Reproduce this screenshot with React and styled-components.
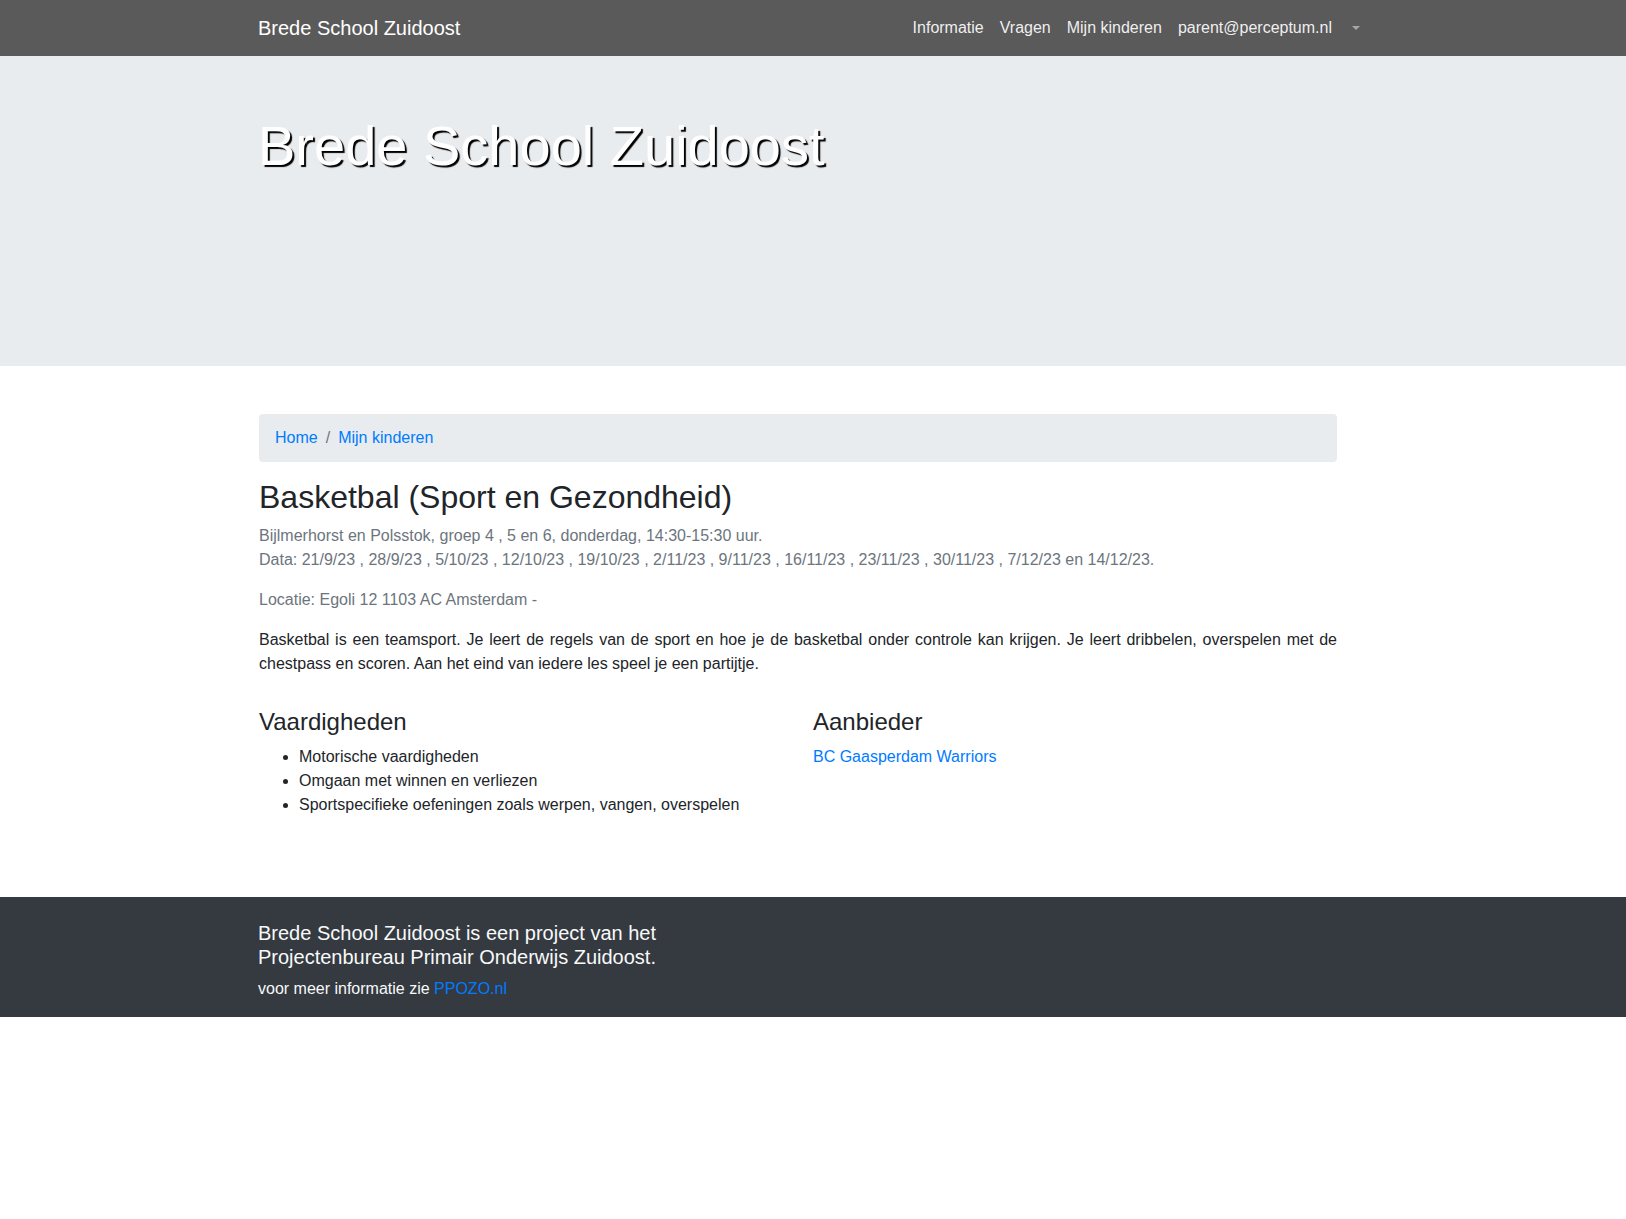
import React from "react";
import styled, { createGlobalStyle } from "styled-components";

const GlobalStyle = createGlobalStyle`
  html, body { margin: 0; padding: 0; background: #fff; }
  body {
    font-family: "Liberation Sans", Arial, Helvetica, sans-serif;
    font-size: 16px;
    line-height: 1.5;
    color: #212529;
  }
  * { box-sizing: border-box; }
`;

const Navbar = styled.nav`
  background: #5a5a5a;
  height: 56px;
`;

const Container = styled.div`
  width: 1110px;
  margin: 0 auto;
`;

const NavInner = styled(Container)`
  height: 100%;
  display: flex;
  align-items: center;
  justify-content: space-between;
`;

const Brand = styled.a`
  color: #fff;
  font-size: 20px;
  line-height: 30px;
  text-decoration: none;
`;

const NavList = styled.ul`
  display: flex;
  align-items: center;
  list-style: none;
  margin: 0;
  padding: 0;
`;

const NavLink = styled.a`
  display: block;
  padding: 8px;
  color: rgba(255, 255, 255, 0.92);
  text-decoration: none;
  line-height: 24px;
`;

const Caret = styled.span`
  display: inline-block;
  width: 0;
  height: 0;
  margin: 0 8px 0 12px;
  border-top: 4px solid #a6a6a6;
  border-left: 4px solid transparent;
  border-right: 4px solid transparent;
  vertical-align: middle;
  transform: translateY(-1px);
`;

const Hero = styled.header`
  background: #e9ecef;
  height: 310px;
  padding-top: 56px;
`;

const HeroTitle = styled.h1`
  margin: 0;
  font-size: 56px;
  font-weight: 300;
  line-height: 1.2;
  color: #fff;
  text-shadow: 2px 2px 1px #000;
`;

const Main = styled(Container)`
  padding-left: 1px;
  padding-right: 31px;
  padding-top: 48px;
`;

const Breadcrumb = styled.ol`
  display: flex;
  list-style: none;
  margin: 0 0 16px;
  padding: 12px 16px;
  background: #e9ecef;
  border-radius: 4px;
`;

const Crumb = styled.li`
  & + &::before {
    content: "/";
    color: #6c757d;
    padding: 0 8px;
  }
`;

const Link = styled.a`
  color: #007bff;
  text-decoration: none;
`;

const Title = styled.h2`
  margin: 0 0 8px;
  font-size: 32px;
  font-weight: 500;
  line-height: 1.2;
`;

const Para = styled.p`
  margin: 0 0 16px;
  color: ${(p) => (p.$muted ? "#6c757d" : "#212529")};
  text-align: ${(p) => (p.$justify ? "justify" : "left")};
`;

const Columns = styled.div`
  display: grid;
  grid-template-columns: 1fr 1fr;
  column-gap: 30px;
  margin-top: 32px;
`;

const SubTitle = styled.h4`
  margin: 0 0 8px;
  font-size: 24px;
  font-weight: 500;
  line-height: 1.2;
`;

const List = styled.ul`
  margin: 0 0 16px;
  padding-left: 40px;
`;

const Footer = styled.footer`
  margin-top: 64px;
  background: #343a40;
  color: #f8f9fa;
  padding-top: 24px;
`;

const FooterTitle = styled.h5`
  margin: 0 0 8px;
  max-width: 445px;
  font-size: 20px;
  font-weight: 500;
  line-height: 1.2;
`;

const FooterText = styled.p`
  margin: 0;
  padding-bottom: 16px;
`;

export default function App() {
  return (
    <>
      <GlobalStyle />
      <Navbar>
        <NavInner>
          <Brand href="#">Brede School Zuidoost</Brand>
          <NavList>
            <li><NavLink href="#">Informatie</NavLink></li>
            <li><NavLink href="#">Vragen</NavLink></li>
            <li><NavLink href="#">Mijn kinderen</NavLink></li>
            <li><NavLink href="#">parent@perceptum.nl</NavLink></li>
            <li><Caret /></li>
          </NavList>
        </NavInner>
      </Navbar>
      <Hero>
        <Container>
          <HeroTitle>Brede School Zuidoost</HeroTitle>
        </Container>
      </Hero>
      <Main>
        <Breadcrumb>
          <Crumb><Link href="#">Home</Link></Crumb>
          <Crumb><Link href="#">Mijn kinderen</Link></Crumb>
        </Breadcrumb>
        <Title>Basketbal (Sport en Gezondheid)</Title>
        <Para $muted>
          Bijlmerhorst en Polsstok, groep 4 , 5 en 6, donderdag, 14:30-15:30 uur.
          <br />
          Data: 21/9/23 , 28/9/23 , 5/10/23 , 12/10/23 , 19/10/23 , 2/11/23 , 9/11/23 , 16/11/23 , 23/11/23 , 30/11/23 , 7/12/23 en 14/12/23.
        </Para>
        <Para $muted>Locatie: Egoli 12 1103 AC Amsterdam -</Para>
        <Para $justify>
          Basketbal is een teamsport. Je leert de regels van de sport en hoe je de basketbal onder controle kan krijgen. Je leert dribbelen, overspelen met de chestpass en scoren. Aan het eind van iedere les speel je een partijtje.
        </Para>
        <Columns>
          <div>
            <SubTitle>Vaardigheden</SubTitle>
            <List>
              <li>Motorische vaardigheden</li>
              <li>Omgaan met winnen en verliezen</li>
              <li>Sportspecifieke oefeningen zoals werpen, vangen, overspelen</li>
            </List>
          </div>
          <div>
            <SubTitle>Aanbieder</SubTitle>
            <Link href="#">BC Gaasperdam Warriors</Link>
          </div>
        </Columns>
      </Main>
      <Footer>
        <Container>
          <FooterTitle>
            Brede School Zuidoost is een project van het Projectenbureau Primair Onderwijs Zuidoost.
          </FooterTitle>
          <FooterText>
            voor meer informatie zie <Link href="#">PPOZO.nl</Link>
          </FooterText>
        </Container>
      </Footer>
    </>
  );
}
